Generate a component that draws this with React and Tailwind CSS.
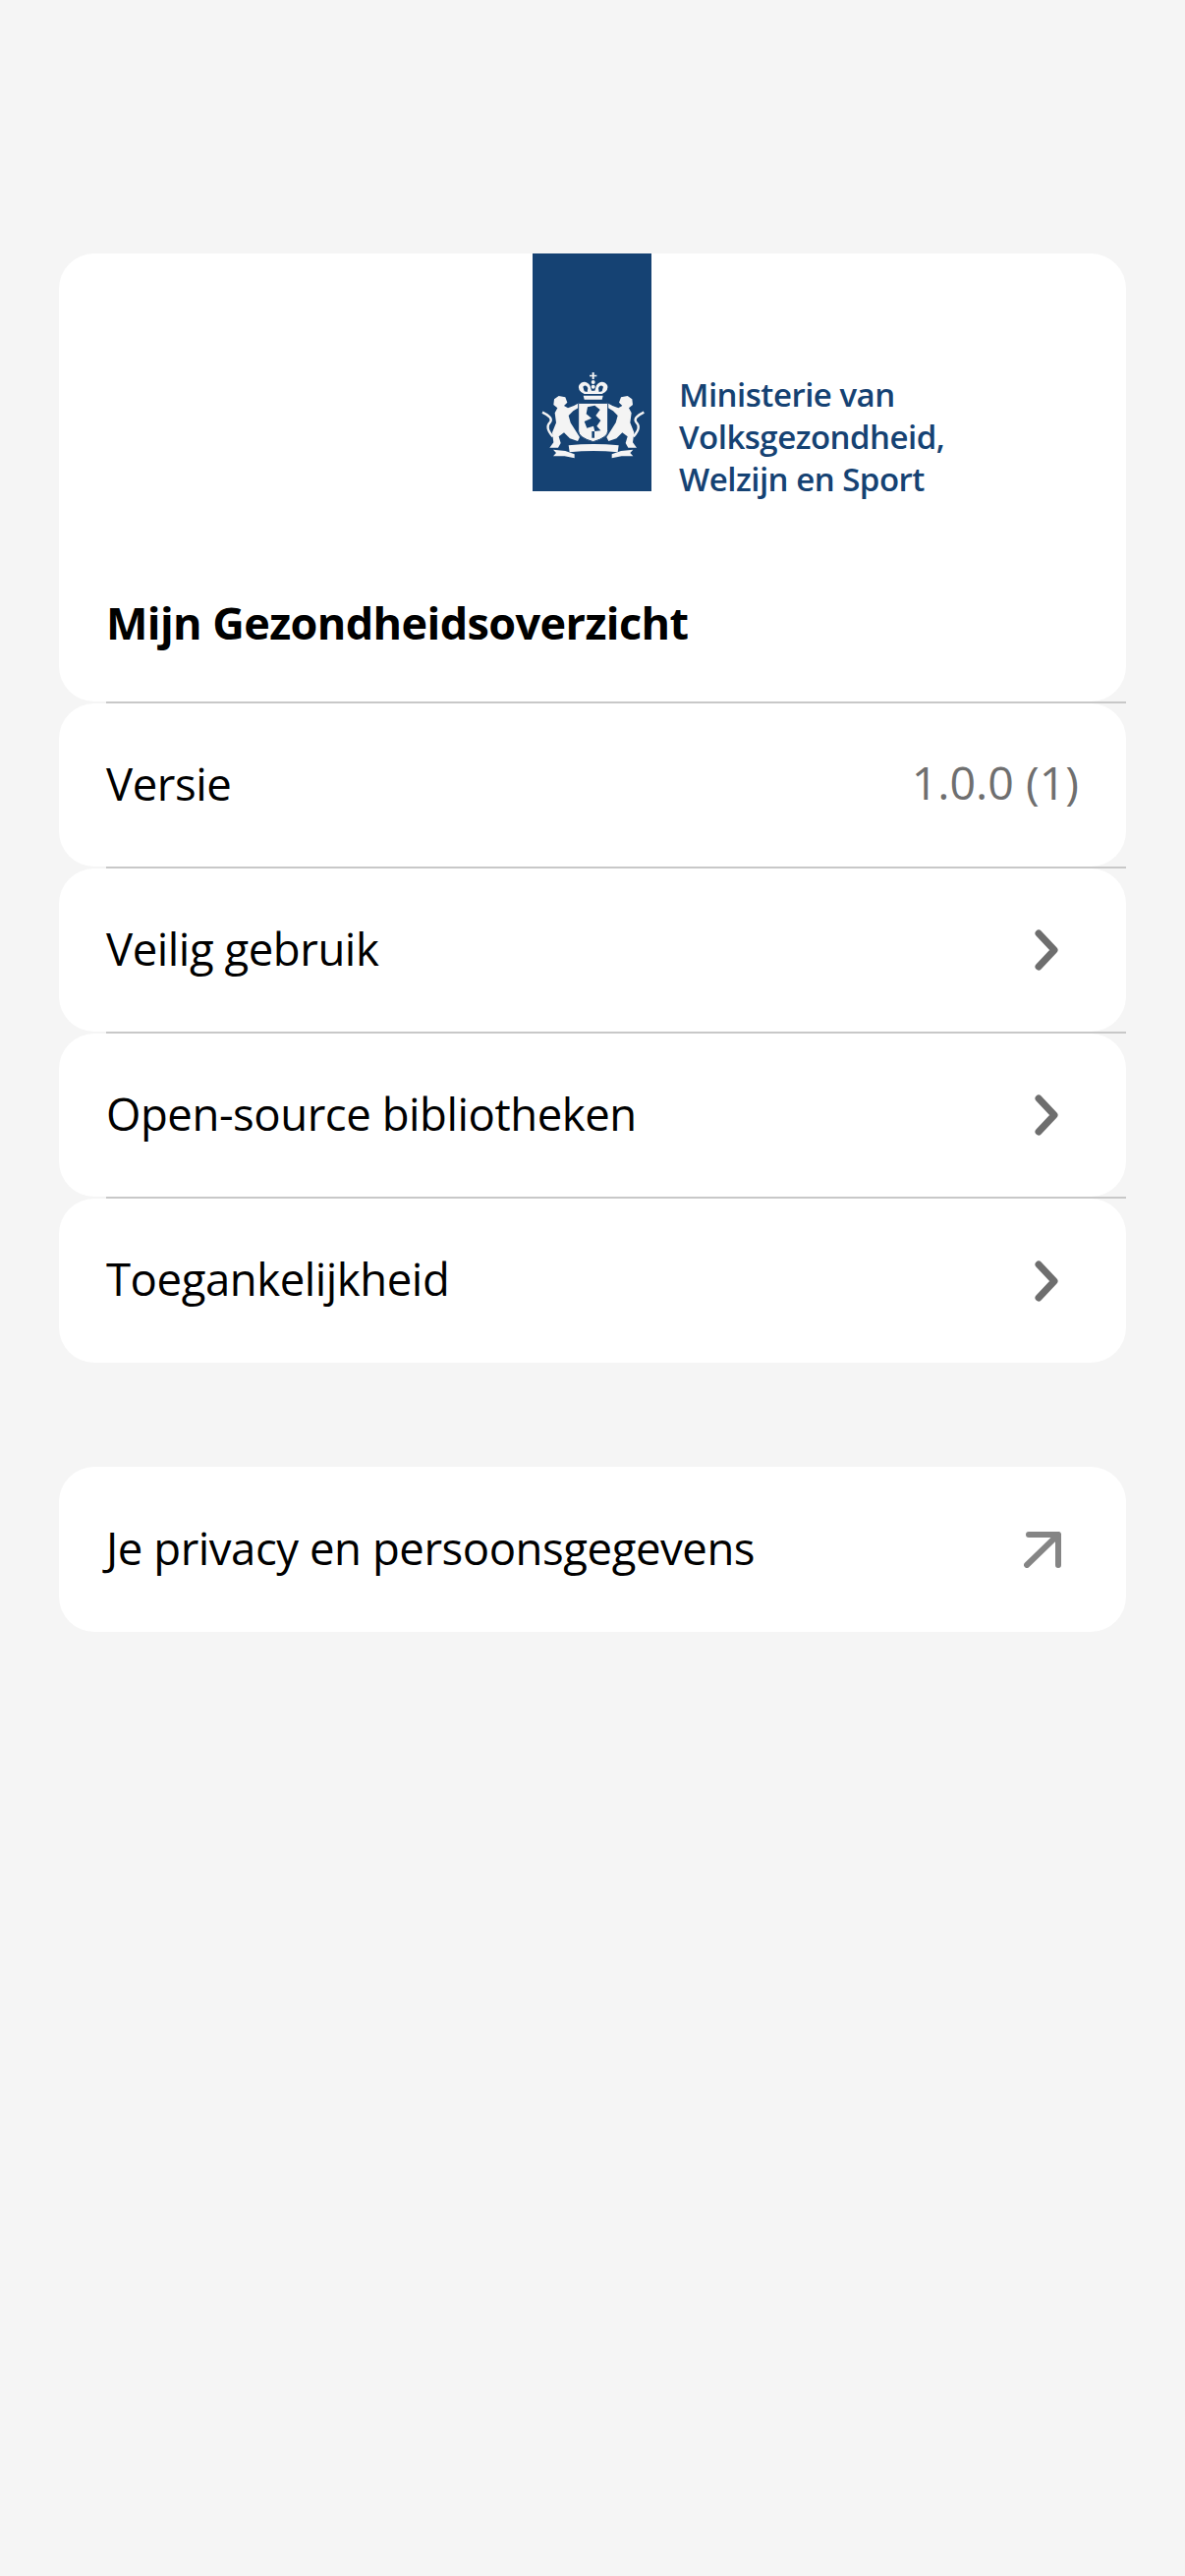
function Crest() {
  const lion =
    'M98 138 L112 128 L132 132 L138 148 L128 158 L140 165 L158 158 L176 148 L176 162 L156 174 L142 188 L148 210 L176 254 L170 266 L146 258 L128 240 L112 252 L118 272 L110 286 L84 286 L96 270 L92 240 L104 210 L100 180 L108 165 L96 155 Z'
  const tail = 'M94 252 Q68 224 86 208 Q96 194 62 178'
  return (
    <svg viewBox="50 50 330 276" className="w-[110px] h-[92px]" fill="#f4f4f4">
      <path d={lion} />
      <path d={lion} transform="translate(434 0) scale(-1 1)" />
      <path d={tail} fill="none" stroke="#f4f4f4" strokeWidth="7" />
      <path d={tail} fill="none" stroke="#f4f4f4" strokeWidth="7" transform="translate(434 0) scale(-1 1)" />
      {/* schild */}
      <path d="M172 150 L262 150 L262 235 Q262 255 217 268 Q172 255 172 235 Z" stroke="#154273" strokeWidth="3" />
      <path
        d="M200 162 L222 157 L238 170 L225 188 L240 203 L228 220 L240 234 L222 236 L218 220 L198 226 L190 206 L212 196 L196 183 Z"
        fill="#154273"
      />
      <path d="M213 236 h8 v20 h-8 Z" fill="#154273" />
      {/* kroon */}
      <path d="M214 56 h6 v8 h8 v5 h-8 v8 h-6 v-8 h-8 v-5 h8 Z" />
      <circle cx="217" cy="86" r="6" />
      <circle cx="217" cy="100" r="6" />
      <path d="M190 122 L180 116 Q165 100 180 88 Q196 80 207 96 L212 112 L222 112 L227 96 Q238 80 254 88 Q269 100 254 116 L244 122 Z" />
      <path d="M186 100 Q195 92 201 104 L199 116 L190 114 Z M248 100 Q239 92 233 104 L235 116 L244 114 Z" fill="#154273" />
      <path d="M187 127 H247 L244 139 H190 Z" />
      {/* lint */}
      <path d="M142 279 Q217 271 295 279 L292 300 Q217 292 145 300 Z" />
      <path d="M95 292 L132 296 L160 306 L160 318 L130 312 L95 312 L104 302 Z" />
      <path d="M339 292 L302 296 L274 306 L274 318 L304 312 L339 312 L330 302 Z" />
    </svg>
  )
}

function Logo() {
  return (
    <div className="flex pl-[482px]">
      <div className="w-[121px] h-[242px] bg-[#154273] flex flex-col items-center justify-end pb-[31px]">
        <Crest />
      </div>
      <div className="pl-[28px] pt-[122px] text-[#154273] text-[33px] leading-[43px] font-semibold tracking-[-0.5px] whitespace-nowrap">
        Ministerie van
        <br />
        Volksgezondheid,
        <br />
        Welzijn en Sport
      </div>
    </div>
  )
}

function Divider() {
  return <div className="h-[2px] ml-[48px] bg-[#c8c8c8]" />
}

function Chevron() {
  return (
    <svg viewBox="0 0 24 42" className="w-[24px] h-[42px] mr-[21px]" fill="none" stroke="#6e6e6e" strokeWidth="7" strokeLinecap="round" strokeLinejoin="round">
      <path d="M4 4 L20 21 L4 38" />
    </svg>
  )
}

function ArrowOut() {
  return (
    <svg viewBox="0 0 38 37" className="w-[38px] h-[37px] mr-[18px]" fill="none" stroke="#858585" strokeWidth="6" strokeLinecap="round" strokeLinejoin="round">
      <path d="M3 34 L35 3 M5 3 H35 V34" />
    </svg>
  )
}

function Row({ label, value, icon, height = 'h-[166px]' }) {
  return (
    <div className={`${height} rounded-[36px] bg-white flex items-center justify-between pl-[48px] pr-[48px]`}>
      <span className="pb-[4px] text-[45.5px] tracking-[-0.45px] text-black">{label}</span>
      {value && <span className="pb-[4px] text-[46.5px] text-[#6f6f6f]">{value}</span>}
      {icon}
    </div>
  )
}

export default function App() {
  return (
    <div className="min-h-[2622px] bg-[#f5f5f5] px-[60px] pt-[258px] font-['Open_Sans',sans-serif]">
      <div className="flex flex-col">
        <div className="h-[456px] rounded-[36px] bg-white overflow-hidden">
          <Logo />
          <h1 className="pl-[48px] pt-[96px] text-[45px] font-bold tracking-[-0.6px] text-black leading-[58px]">
            Mijn Gezondheidsoverzicht
          </h1>
        </div>
        <Divider />
        <Row label="Versie" value="1.0.0 (1)" />
        <Divider />
        <Row label="Veilig gebruik" icon={<Chevron />} />
        <Divider />
        <Row label="Open-source bibliotheken" icon={<Chevron />} />
        <Divider />
        <Row height="h-[167px]" label="Toegankelijkheid" icon={<Chevron />} />
      </div>
      <div className="mt-[106px]">
        <Row height="h-[168px]" label="Je privacy en persoonsgegevens" icon={<ArrowOut />} />
      </div>
    </div>
  )
}
